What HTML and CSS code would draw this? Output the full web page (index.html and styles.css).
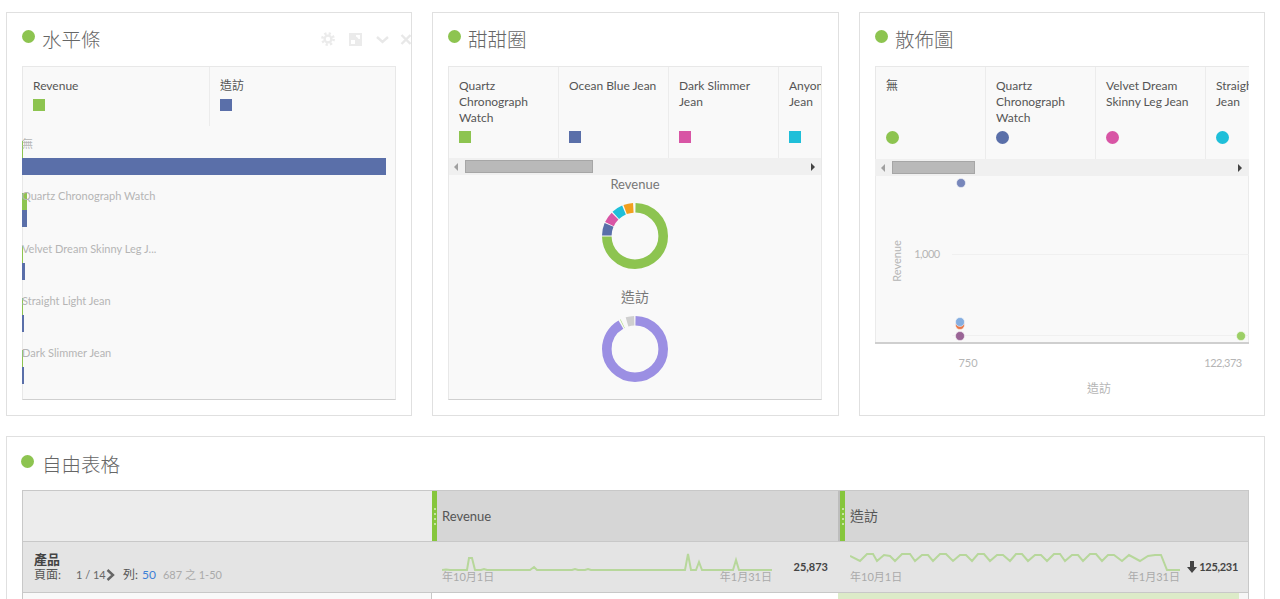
FILE: index.html
```html
<!DOCTYPE html>
<html lang="zh-Hant">
<head>
    <meta charset="UTF-8">
    <title>Workspace</title>
    <link rel="stylesheet" href="styles.css">
</head>
<body>
    <div class="top-row">
        <!-- Horizontal bar -->
        <section class="card">
            <div class="card-title">
                <span class="dot"></span>
                <h2>水平條</h2>
                <div class="tools">
                    <svg width="14" height="14" viewBox="0 0 14 14"><circle class="gear-teeth" cx="7" cy="7" r="5.6"/><circle class="gear-ring" cx="7" cy="7" r="3.4"/></svg>
                    <svg width="13" height="13" viewBox="0 0 13 13"><path class="tool-fill" d="M0 0h13v13H0z"/><path class="tool-cut" d="M7 2h4v4H9.6L8.4 4.6 6 7H2v4h4V7L8.4 4.6 7 3.4z"/></svg>
                    <svg width="13" height="13" viewBox="0 0 13 13"><path class="tool-line" d="M1 4l5.5 5L12 4"/></svg>
                    <svg class="tool-close" width="12" height="13" viewBox="0 0 12 13"><path class="tool-line" d="M1.5 2l9 9M10.5 2l-9 9"/></svg>
                </div>
            </div>
            <div class="panel">
                <div class="legend">
                    <div class="legend-cell wide"><span class="legend-text">Revenue</span><i class="swatch green"></i></div>
                    <div class="legend-cell wide last"><span class="legend-text">造訪</span><i class="swatch blue"></i></div>
                </div>
                <div class="bars">
                    <div class="bar-row">
                        <div class="bar-label">無</div>
                        <div class="bar bar-green" style="width:1px"></div>
                        <div class="bar bar-blue" style="width:364px"></div>
                    </div>
                    <div class="bar-row">
                        <div class="bar-label">Quartz Chronograph Watch</div>
                        <div class="bar bar-green" style="width:5px"></div>
                        <div class="bar bar-blue" style="width:5px"></div>
                    </div>
                    <div class="bar-row">
                        <div class="bar-label">Velvet Dream Skinny Leg J...</div>
                        <div class="bar bar-green" style="width:1px"></div>
                        <div class="bar bar-blue" style="width:3px"></div>
                    </div>
                    <div class="bar-row">
                        <div class="bar-label">Straight Light Jean</div>
                        <div class="bar bar-green" style="width:1px"></div>
                        <div class="bar bar-blue" style="width:2px"></div>
                    </div>
                    <div class="bar-row">
                        <div class="bar-label">Dark Slimmer Jean</div>
                        <div class="bar bar-green" style="width:1px"></div>
                        <div class="bar bar-blue" style="width:2px"></div>
                    </div>
                </div>
            </div>
        </section>

        <!-- Donut -->
        <section class="card">
            <div class="card-title">
                <span class="dot"></span>
                <h2>甜甜圈</h2>
            </div>
            <div class="panel">
                <div class="legend">
                    <div class="legend-cell"><span class="legend-text">Quartz Chronograph Watch</span><i class="swatch green"></i></div>
                    <div class="legend-cell"><span class="legend-text">Ocean Blue Jean</span><i class="swatch blue"></i></div>
                    <div class="legend-cell"><span class="legend-text">Dark Slimmer Jean</span><i class="swatch pink"></i></div>
                    <div class="legend-cell"><span class="legend-text">Anyone Skinny Jean</span><i class="swatch cyan"></i></div>
                </div>
                <div class="scrollbar">
                    <i class="arrow-left"></i>
                    <i class="thumb thumb-donut"></i>
                    <i class="arrow-right"></i>
                </div>
                <div class="donut-title">Revenue</div>
                <svg class="donut" width="66" height="66" viewBox="0 0 66 66">
                    <g transform="rotate(-90 33 33)">
                        <circle class="seg seg-green" cx="33" cy="33" r="28.2" pathLength="360" stroke-dasharray="268 360" stroke-dashoffset="-1"/>
                        <circle class="seg seg-blue" cx="33" cy="33" r="28.2" pathLength="360" stroke-dasharray="22 360" stroke-dashoffset="-271"/>
                        <circle class="seg seg-pink" cx="33" cy="33" r="28.2" pathLength="360" stroke-dasharray="20 360" stroke-dashoffset="-295"/>
                        <circle class="seg seg-cyan" cx="33" cy="33" r="28.2" pathLength="360" stroke-dasharray="20 360" stroke-dashoffset="-317"/>
                        <circle class="seg seg-orange" cx="33" cy="33" r="28.2" pathLength="360" stroke-dasharray="17 360" stroke-dashoffset="-339.5"/>
                    </g>
                </svg>
                <div class="donut-title cjk">造訪</div>
                <svg class="donut" width="66" height="66" viewBox="0 0 66 66">
                    <g transform="rotate(-90 33 33)">
                        <circle class="seg seg-purple" cx="33" cy="33" r="28.2" pathLength="360" stroke-dasharray="329 360" stroke-dashoffset="-1"/>
                        <circle class="seg seg-thin" cx="33" cy="33" r="28.2" pathLength="360" stroke-dasharray="1 360" stroke-dashoffset="-333"/>
                        <circle class="seg seg-gray" cx="33" cy="33" r="28.2" pathLength="360" stroke-dasharray="15 360" stroke-dashoffset="-343.5"/>
                    </g>
                </svg>
            </div>
        </section>

        <!-- Scatter -->
        <section class="card">
            <div class="card-title">
                <span class="dot"></span>
                <h2>散佈圖</h2>
            </div>
            <div class="panel panel-open">
                <div class="legend legend-edge">
                    <div class="legend-cell"><span class="legend-text">無</span><i class="swatch round green"></i></div>
                    <div class="legend-cell"><span class="legend-text">Quartz Chronograph Watch</span><i class="swatch round blue"></i></div>
                    <div class="legend-cell"><span class="legend-text">Velvet Dream Skinny Leg Jean</span><i class="swatch round pink"></i></div>
                    <div class="legend-cell"><span class="legend-text">Straight Light Jean</span><i class="swatch round cyan"></i></div>
                </div>
                <div class="scrollbar scrollbar-edge">
                    <i class="arrow-left"></i>
                    <i class="thumb thumb-scatter"></i>
                    <i class="arrow-right"></i>
                </div>
                <svg class="plot" width="374" height="222" viewBox="0 0 374 222">
                    <rect class="plot-bg" x="0" y="0" width="374" height="167"/>
                    <path class="plot-side" d="M.5 0v167M373.5 0v167"/>
                    <path class="plot-grid" d="M77 78.5h297M77 159.5h297"/>
                    <path class="plot-axis" d="M0 167h374"/>
                    <text class="plot-text plot-tight" x="52" y="82" text-anchor="middle">1,000</text>
                    <text class="plot-text" transform="translate(26 85) rotate(-90)" text-anchor="middle">Revenue</text>
                    <text class="plot-text" x="93" y="191" text-anchor="middle">750</text>
                    <text class="plot-text plot-tight" x="348" y="191" text-anchor="middle">122,373</text>
                    <text class="plot-text plot-cjk" x="224" y="217" text-anchor="middle">造訪</text>
                    <circle class="pt" cx="86" cy="7" r="4.5" fill="#7887bb"/>
                    <circle class="pt" cx="85" cy="149" r="4.5" fill="#e8794a"/>
                    <circle class="pt" cx="85" cy="146" r="4.5" fill="#85aee0"/>
                    <circle class="pt" cx="85" cy="160" r="4.5" fill="#9a6596"/>
                    <circle class="pt" cx="366" cy="160" r="4.5" fill="#9ccf66"/>
                </svg>
            </div>
        </section>
    </div>

    <!-- Freeform table -->
    <section class="card card-table">
        <div class="card-title">
            <span class="dot"></span>
            <h2>自由表格</h2>
        </div>
        <div class="table">
            <div class="row row-head">
                <div class="head-blank"></div>
                <div class="head-col head-mid"><span class="grip"><i></i></span>Revenue</div>
                <div class="head-col head-cjk"><span class="grip"><i></i></span>造訪</div>
            </div>
            <div class="row row-sum">
                <div class="sum-name">
                    <strong>產品</strong>
                    <div class="pager">
                        <span class="pager-label">頁面:</span>
                        <span class="pager-page">1 / 14</span>
                        <svg class="pager-next" width="9" height="12" viewBox="0 0 9 12"><path d="M1.5 1L7 6l-5.5 5"/></svg>
                        <span class="pager-rows">列:</span>
                        <span class="pager-count">50</span>
                        <span class="pager-total">687 之 1-50</span>
                    </div>
                </div>
                <div class="sum-col">
                    <div class="spark">
                        <svg width="330" height="19" viewBox="0 0 330 19"><polyline class="spark-line" points="0,18 4,17.5 8,18 25,18 27,6 30,6 33,18 39,18 42,17 45,18 88,18 92,15 95,18 130,18 133,17 136,18 143,18 146,17 149,18 240,18 243,18 246,2 249,18 254,18 257,10 260,18 291,18 294,8 297,18 330,18"/></svg>
                        <div class="spark-dates"><span>年10月1日</span><span>年1月31日</span></div>
                    </div>
                    <div class="sum-value">25,873</div>
                </div>
                <div class="sum-col">
                    <div class="spark">
                        <svg width="330" height="19" viewBox="0 0 330 19"><polyline class="spark-line" points="0,4 10,9 17,2 23,2 27,9 34,3 40,4 45,9 52,2 60,2 65,9 72,3 78,3 83,9 90,2 96,2 103,9 110,3 116,3 122,9 128,2 134,2 140,9 147,3 153,3 160,9 166,2 172,2 178,9 185,3 191,3 197,9 204,2 210,2 215,9 222,3 228,3 233,9 240,2 246,2 252,9 258,3 264,3 272,9 279,3 290,9 298,4 305,3 311,3 317,18 330,18"/></svg>
                        <div class="spark-dates"><span>年10月1日</span><span>年1月31日</span></div>
                    </div>
                    <svg class="down-arrow" width="10" height="12" viewBox="0 0 10 12"><path d="M3 0h4v6h3l-5 6-5-6h3z"/></svg>
                    <div class="sum-value sum-value-near">125,231</div>
                </div>
            </div>
            <div class="row row-body">
                <div class="body-name"></div>
                <div class="body-mid"></div>
                <div class="body-last"><div class="body-fill"></div></div>
            </div>
        </div>
    </section>
</body>
</html>
```

FILE: styles.css
```css
html, body {
    margin: 0;
    height: 599px;
    overflow: hidden;
}
body {
    padding: 12px 15px 0 6px;
    box-sizing: border-box;
    background-color: #fff;
    color: #555;
    font-family: Lato, "Noto Sans CJK TC", sans-serif;
    font-size: 12px;
    line-height: 16px;
}
.top-row {
    display: grid;
    grid-template-columns: 406px 407px 406px;
    gap: 20px;
    margin-bottom: 20px;
}
.card {
    box-sizing: border-box;
    height: 404px;
    padding: 0 15px;
    border: 1px solid #e0e0e0;
    overflow: hidden;
}
.card-title {
    display: flex;
    align-items: flex-start;
    height: 53px;
    padding-top: 13px;
    box-sizing: border-box;
}
.card-title h2 {
    margin: 0 0 0 7px;
    font-size: 19.5px;
    font-weight: 300;
    line-height: 28px;
    color: #666;
}
.dot {
    flex: none;
    width: 13px;
    height: 13px;
    margin-top: 4px;
    border-radius: 50%;
    background-color: #8dc450;
}
.tools {
    display: flex;
    align-items: center;
    gap: 14px;
    height: 20px;
    margin: 3px -16px 0 auto;
}
.tool-close { margin-left: -3px; }
.gear-teeth {
    fill: none;
    stroke: #ebebeb;
    stroke-width: 2.6;
    stroke-dasharray: 2.2 2.2;
}
.gear-ring {
    fill: none;
    stroke: #ebebeb;
    stroke-width: 2.4;
}
.tool-fill { fill: #ebebeb; }
.tool-cut { fill: #fff; }
.tool-line {
    fill: none;
    stroke: #e8e8e8;
    stroke-width: 2.4;
}

/* Chart panels */
.panel {
    box-sizing: border-box;
    width: 374px;
    height: 334px;
    border: 1px solid #e8e8e8;
    border-bottom-color: #d0d0d0;
    background-color: #f9f9f9;
}
.panel-open {
    border: 0;
    border-top: 1px solid #e8e8e8;
    background-color: #fff;
}
.legend {
    display: flex;
    overflow: hidden;
    background-color: #f9f9f9;
}
.legend-edge { border-left: 1px solid #e8e8e8; }
.legend-cell {
    flex: none;
    display: flex;
    flex-direction: column;
    align-items: flex-start;
    box-sizing: border-box;
    width: 110px;
    padding: 11px 11px 15px 10px;
    border-right: 1px solid #ececec;
}
.legend-cell.wide { width: 187px; }
.legend-cell.last { border-right: 0; }
.legend-text { margin-bottom: 5px; }
.swatch {
    width: 12px;
    height: 12px;
    margin-top: auto;
}
.swatch.round {
    width: 13px;
    height: 13px;
    border-radius: 50%;
}
.green { background-color: #8dc450; }
.blue { background-color: #5a6fa9; }
.pink { background-color: #d855a5; }
.cyan { background-color: #1fbfd9; }

/* Fake scroll track under the legends */
.scrollbar {
    display: flex;
    align-items: center;
    height: 17px;
    padding: 0 6px 0 5px;
    background-color: #f0f0f0;
}
.scrollbar-edge { padding: 0 7px 0 6px; }
.arrow-left, .arrow-right {
    width: 0;
    height: 0;
    border-top: 4px solid transparent;
    border-bottom: 4px solid transparent;
}
.arrow-left { border-right: 4px solid #a0a0a0; }
.arrow-right {
    margin-left: auto;
    border-left: 4px solid #444;
}
.thumb {
    box-sizing: border-box;
    height: 13px;
    margin-left: 7px;
    border: 1px solid #a6a6a6;
    background-color: #b9b9b9;
}
.thumb-donut { width: 128px; }
.thumb-scatter { width: 83px; }

/* Horizontal bars */
.bars { padding-top: 10px; }
.bar-row {
    height: 52.3px;
    margin-left: -1px;
}
.bar-label {
    height: 16px;
    margin-bottom: -11px;
    font-size: 11px;
    color: #b5b5b5;
    white-space: nowrap;
    position: relative;
}
.bar { height: 17px; }
.bar-green { background-color: #8dc450; }
.bar-blue { background-color: #5a6fa9; }

/* Donuts */
.donut-title {
    height: 16px;
    padding-top: 1px;
    font-size: 13px;
    text-align: center;
    color: #777;
}
.donut-title.cjk {
    margin-top: 20px;
    padding-top: 0;
    font-size: 14px;
}
.donut {
    display: block;
    margin: 11px auto 0;
}
.seg {
    fill: none;
    stroke-width: 9.6;
}
.seg-green { stroke: #8dc450; }
.seg-blue { stroke: #5a6fa9; }
.seg-pink { stroke: #d855a5; }
.seg-cyan { stroke: #1fbfd9; }
.seg-orange { stroke: #f3a01f; }
.seg-purple { stroke: #9b8fe3; }
.seg-gray { stroke: #cfcfcf; }
.seg-thin { stroke: #a9d678; }

/* Scatter */
.plot { display: block; }
.plot-bg { fill: #f9f9f9; }
.plot-side {
    fill: none;
    stroke: #ebebeb;
}
.plot-grid {
    fill: none;
    stroke: #f0f0f0;
}
.plot-axis {
    fill: none;
    stroke: #cfcfcf;
    stroke-width: 2;
}
.plot-text {
    fill: #b5b5b5;
    font-size: 11px;
}
.plot-tight { letter-spacing: -.5px; }
.plot-cjk { font-size: 12px; }
.pt {
    stroke: #fff;
    stroke-opacity: .5;
}

/* Table */
.card-table {
    height: 163px;
    border-bottom: 0;
}
.card-table .card-title { padding-top: 14px; }
.card-table .dot { margin-left: -1px; }
.card-table h2 { margin-left: 8px; }
.table {
    box-sizing: border-box;
    width: 1227px;
    border: 1px solid #c8c8c8;
}
.row {
    display: grid;
    grid-template-columns: 409px 408px 408px;
    border-bottom: 1px solid #c8c8c8;
}
.row-head {
    box-sizing: border-box;
    height: 51px;
    background-color: #d6d6d6;
}
.head-blank { background-color: #ececec; }
.head-col {
    display: flex;
    align-items: center;
    font-size: 13px;
    color: #555;
}
.head-cjk { font-size: 14px; }
.head-mid { border-right: 2px solid #bdbdbd; }
.grip {
    display: flex;
    align-items: center;
    justify-content: center;
    align-self: stretch;
    width: 5px;
    margin-right: 5px;
    background-color: #86c63c;
}
.grip i {
    width: 2px;
    height: 17px;
    background: repeating-linear-gradient(#c6e3a0 0 2px, transparent 2px 5px);
}
.row-sum {
    box-sizing: border-box;
    height: 51px;
    background-color: #e4e4e4;
}
.sum-name { padding: 9px 0 0 11px; }
.sum-name strong {
    display: block;
    font-size: 13px;
    line-height: 16px;
    color: #444;
}
.pager {
    display: flex;
    align-items: center;
    height: 16px;
    white-space: nowrap;
}
.pager-label { width: 42px; }
.pager-page {
    width: 30px;
    font-size: 11px;
    color: #666;
}
.pager-next { margin-right: 8px; }
.pager-next path {
    fill: none;
    stroke: #666;
    stroke-width: 2.4;
}
.pager-rows { margin-right: 4px; }
.pager-count { margin-right: 7px; color: #3d7fd6; }
.pager-total { font-size: 11px; color: #aaa; }
.sum-col {
    display: flex;
    align-items: flex-start;
    padding: 10px 10px 0 10px;
}
.spark { width: 330px; flex: none; }
.spark svg { display: block; }
.spark-line {
    fill: none;
    stroke: #b7d79b;
    stroke-width: 2;
}
.spark-dates {
    display: flex;
    justify-content: space-between;
    height: 12px;
    font-size: 11px;
    line-height: 12px;
    color: #aaa;
}
.sum-value {
    margin: 8px 2px 0 auto;
    font-size: 11px;
    font-weight: 700;
    line-height: 14px;
    color: #444;
}
.sum-value-near {
    margin-right: 0;
    letter-spacing: -.3px;
}
.down-arrow {
    flex: none;
    margin: 9px 0 0 7px;
    fill: #444;
}
.row-body {
    grid-template-columns: 409px 406px 410px;
    height: 40px;
    border-bottom: 0;
}
.body-name {
    background-color: #f9f9f9;
    border-right: 1px solid #c8c8c8;
}
.body-mid { background-color: #fff; }
.body-last { background-color: #f6f6f6; }
.body-fill {
    width: 401px;
    height: 100%;
    background-color: #dcebc8;
}
```
